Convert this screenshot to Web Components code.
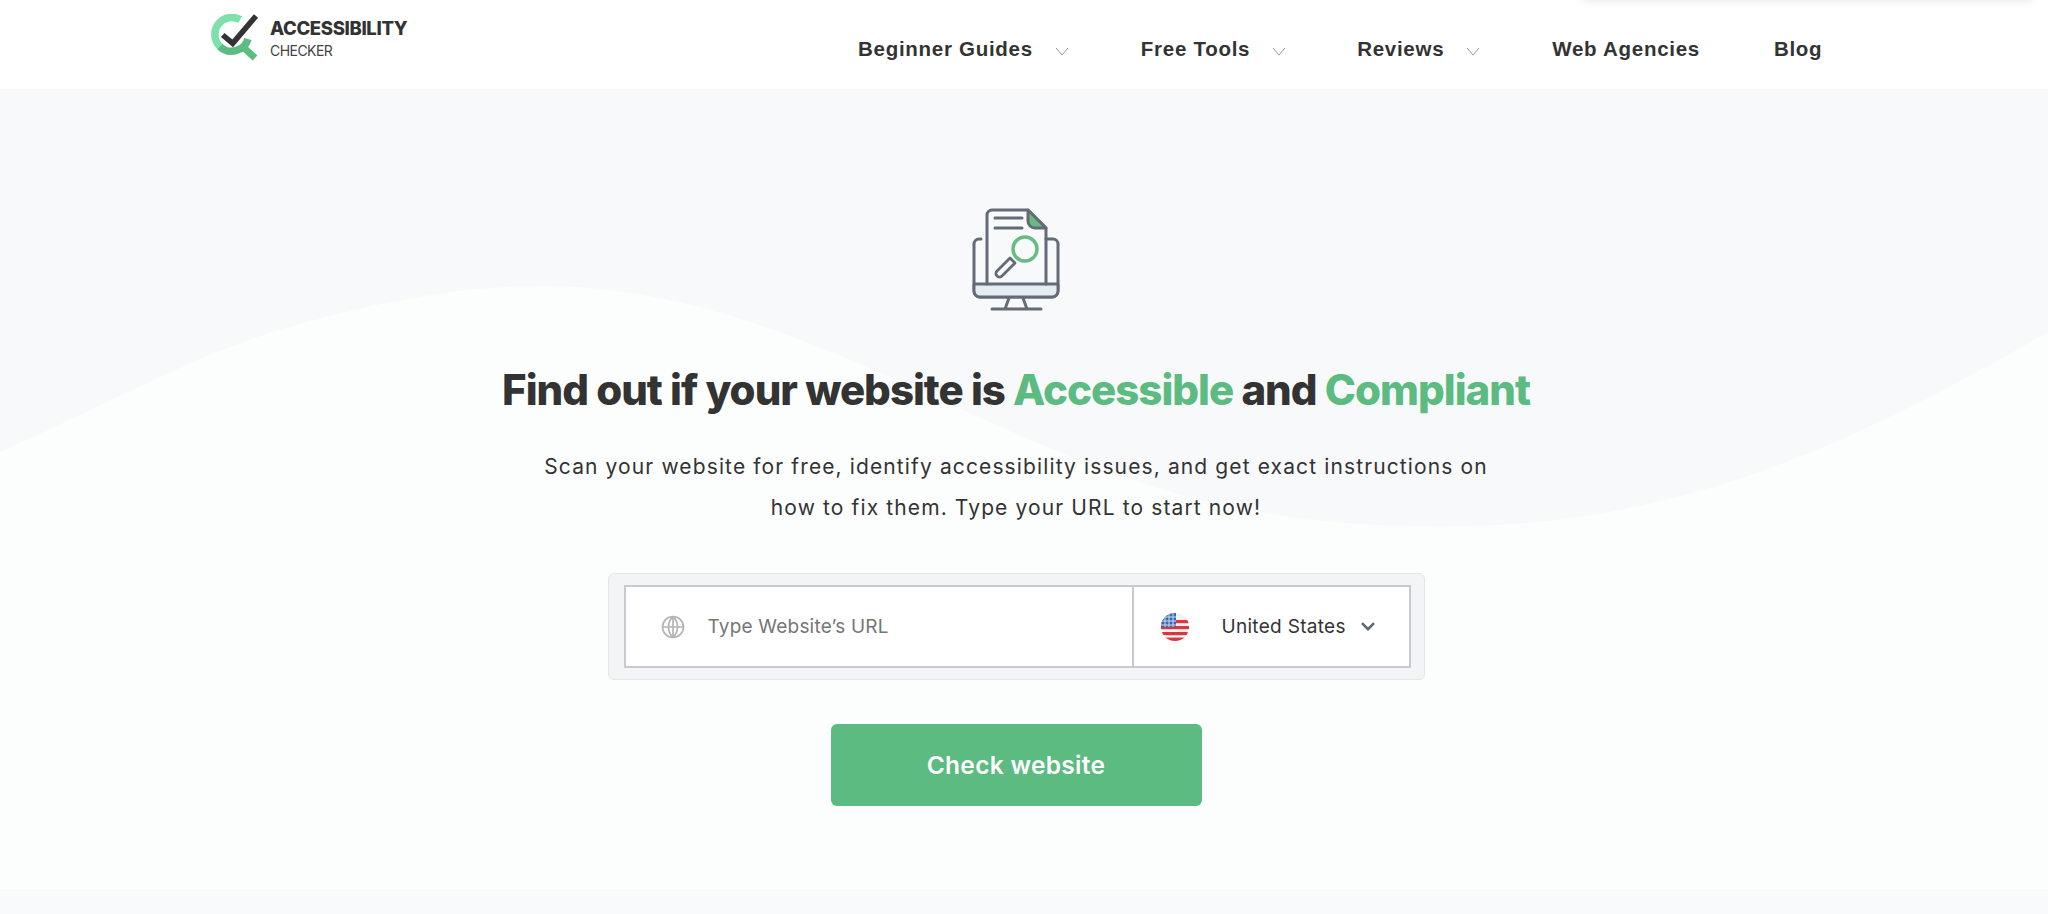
<!DOCTYPE html>
<html lang="en">
<head>
<meta charset="utf-8">
<title>Accessibility Checker</title>
<style>
    html, body { margin: 0; padding: 0; background: #fff; }
    body { height: 914px; overflow: hidden; font-family: Inter, 'Liberation Sans', sans-serif; }
</style>
</head>
<body>
<site-header></site-header>
<hero-section>
    <span slot="lead-1">Scan your website for free, identify accessibility issues, and get exact instructions on</span>
    <span slot="lead-2">how to fix them. Type your URL to start now!</span>
    <scan-form></scan-form>
</hero-section>
<script>
class SiteLogo extends HTMLElement {
    constructor() {
        super();
        this.attachShadow({ mode: 'open' });
    }

    connectedCallback() {
        this.shadowRoot.innerHTML = `
            <style>
                :host { display: flex; flex: none; width: 196px; align-items: flex-start; color: #333; font-family: Inter, sans-serif; }
                svg { width: 48px; height: 50px; flex: none; margin-top: 14px; }
                .words { margin: 18px 0 0 11px; white-space: nowrap; }
                .top { font-size: 18.5px; font-weight: 800; line-height: 20px; letter-spacing: -0.35px; }
                .sub { font-size: 14px; font-weight: 400; line-height: 16px; margin-top: 5px; letter-spacing: -0.55px; color: #444; }
            </style>
            <svg viewBox="0 0 48 50" fill="none">
                <path d="M29.2 5.600A17 17 0 0 0 8.700 32.300" stroke="#7fe0ab" stroke-width="7.500"/>
                <path d="M8.700 32.300A17 17 0 0 0 37 25" stroke="#5bbd80" stroke-width="7.500"/>
                <path d="M31 32l13 12" stroke="#5bbd80" stroke-width="7"/>
                <path d="M11.700 21l10 8.300L45 2" stroke="#333" stroke-width="5.500"/>
            </svg>
            <div class="words">
                <div class="top">ACCESSIBILITY</div>
                <div class="sub">CHECKER</div>
            </div>
        `;
    }
}

class NavItem extends HTMLElement {
    constructor() {
        super();
        this.attachShadow({ mode: 'open' });
    }

    connectedCallback() {
        const caret = this.hasAttribute('menu')
            ? '<svg viewBox="0 0 14 9" fill="none"><path d="M1 1l6 7 6-7" stroke="#9a9a9a" stroke-width="1"/></svg>'
            : '';
        this.shadowRoot.innerHTML = `
            <style>
                :host { display: flex; align-items: center; }
                span { font: 700 20.5px 'Liberation Sans', Arial, sans-serif; letter-spacing: 0.72px; color: #333; white-space: nowrap; }
                svg { width: 14px; height: 9px; margin: 4px 0 0 22px; }
            </style>
            <span><slot></slot></span>${caret}
        `;
    }
}

class SiteHeader extends HTMLElement {
    constructor() {
        super();
        this.attachShadow({ mode: 'open' });
    }

    connectedCallback() {
        this.shadowRoot.innerHTML = `
            <style>
                :host { display: flex; position: relative; height: 89px; background: #fff; box-sizing: border-box; padding: 0 0 0 211px; }
                nav { display: flex; margin-left: 451px; height: 100%; align-items: center; padding-top: 9px; box-sizing: border-box; }
                nav-item { margin-right: 72px; }
                nav-item:nth-child(2) { margin-right: 71px; }
                nav-item:nth-child(3) { margin-right: 72px; }
                nav-item:nth-child(4) { margin-right: 74px; }
                .drop { position: absolute; left: 1580px; right: 14px; top: -12px; height: 12px; border-radius: 6px; background: #fff; box-shadow: 0 1px 10px rgba(0,0,0,.09); }
            </style>
            <site-logo></site-logo>
            <nav>
                <nav-item menu>Beginner Guides</nav-item>
                <nav-item menu>Free Tools</nav-item>
                <nav-item menu>Reviews</nav-item>
                <nav-item>Web Agencies</nav-item>
                <nav-item>Blog</nav-item>
            </nav>
            <div class="drop"></div>
        `;
    }
}

class ScanForm extends HTMLElement {
    constructor() {
        super();
        this.attachShadow({ mode: 'open' });
    }

    connectedCallback() {
        this.shadowRoot.innerHTML = `
            <style>
                :host { display: flex; flex-direction: column; align-items: center; font-family: Inter, sans-serif; }
                .frame { box-sizing: border-box; width: 817px; height: 107px; padding: 11px 13px 12px 15px; background: #f3f4f6; border: 1px solid #e4e6e9; border-radius: 6px; }
                .fields { box-sizing: border-box; display: flex; height: 83px; background: #fff; border: 2px solid #c8cacf; }
                .url { box-sizing: border-box; width: 508px; display: flex; align-items: center; padding-left: 35px; border-right: 2px solid #c8cacf; color: #767676; font-size: 19px; }
                .url svg { width: 24px; height: 24px; margin-right: 23px; }
                .place { letter-spacing: 0.2px; }
                .country { flex: 1; display: flex; align-items: center; padding-left: 27px; font-size: 19px; letter-spacing: 0.3px; color: #333; }
                .flag { width: 28px; height: 28px; margin-right: 33px; }
                .chev { width: 14px; height: 9px; margin-left: 15px; }
                button { display: block; width: 371px; height: 82px; margin-top: 44px; border: 0; border-radius: 6px; background: #5bbb80; color: #fff; font: 600 24.500px Inter, sans-serif; letter-spacing: 0.3px; }
            </style>
            <div class="frame">
                <div class="fields">
                    <div class="url">
                        <svg viewBox="0 0 24 24" fill="none" stroke="#b4b4b4" stroke-width="1.7">
                            <circle cx="12" cy="12" r="10.5"/>
                            <path d="M12 1.500C6 7 6 17 12 22.500M12 1.500C18 7 18 17 12 22.500M12 1.500v21M1.500 12h21"/>
                        </svg>
                        <span class="place">Type Website’s URL</span>
                    </div>
                    <div class="country">
                        <svg class="flag" viewBox="0 0 28 28">
                            <defs><clipPath id="c"><circle cx="14" cy="14" r="14"/></clipPath></defs>
                            <g clip-path="url(#c)">
                                <rect width="28" height="28" fill="#f4f1f1"/>
                                <rect y="7" width="28" height="3.2" fill="#d9363e"/>
                                <rect y="13" width="28" height="3.2" fill="#d9363e"/>
                                <rect y="19" width="28" height="3.2" fill="#d9363e"/>
                                <rect y="24.6" width="28" height="3.4" fill="#d9363e"/>
                                <rect width="15" height="14" fill="#3a66b5"/>
                                <path d="M4 0v14M8 0v14M12 0v14M0 4h15M0 8h15M0 12h15" stroke="#cfdcf0" stroke-width="1"/>
                            </g>
                        </svg>
                        <span>United States</span>
                        <svg class="chev" viewBox="0 0 14 9" fill="none"><path d="M1 1.2l6 6 6-6" stroke="#5c6470" stroke-width="2.400"/></svg>
                    </div>
                </div>
            </div>
            <button type="button">Check website</button>
        `;
    }
}

class HeroSection extends HTMLElement {
    constructor() {
        super();
        this.attachShadow({ mode: 'open' });
    }

    connectedCallback() {
        this.shadowRoot.innerHTML = `
            <style>
                :host { display: flex; flex-direction: column; align-items: center; position: relative; box-sizing: border-box; height: 825px; padding-right: 16px; background: #f8f9fb; overflow: hidden; font-family: Inter, sans-serif; }
                .wave { position: absolute; left: 0; top: 0; width: 2048px; height: 825px; }
                .band { position: absolute; left: 0; right: 0; bottom: 0; height: 25px; background: #f9fafc; }
                .body { position: relative; display: flex; flex-direction: column; align-items: center; }
                .art { width: 88px; height: 103px; margin-top: 119px; display: block; }
                h1 { margin: 55px 0 0; font-size: 42px; line-height: 48px; font-weight: 800; letter-spacing: -1px; color: #333; white-space: nowrap; }
                h1 b { font-weight: 800; color: #5bbb80; }
                p { margin: 32px 0 0; text-align: center; font-size: 21px; line-height: 41px; letter-spacing: 1.12px; color: #333; }
                p span { display: block; }
                .form { margin-top: 45px; }
            </style>
            <svg class="wave" viewBox="0 0 2048 825" preserveAspectRatio="none">
                <path d="M0 363C120 310 200 262 300 235C390 210 470 196 550 197C760 200 930 320 1130 390C1260 435 1370 438 1470 437C1700 432 1880 340 2048 243V825H0Z" fill="#fcfdfd"/>
            </svg>
            <div class="band"></div>
            <div class="body">
                <svg class="art" viewBox="22 13 88 103" fill="none" stroke="#646b76" stroke-width="3" stroke-linecap="round" stroke-linejoin="round">
                    <path d="M31 44h-2a5 5 0 0 0-5 5v47a6 6 0 0 0 6 6h72a6 6 0 0 0 6-6V49a5 5 0 0 0-5-5h-7"/>
                    <path d="M24 89h84v7a6 6 0 0 1-6 6H30a6 6 0 0 1-6-6z" fill="#e3edf3"/>
                    <path d="M37 89V20a5 5 0 0 1 5-5h36l18 18v56"/>
                    <path d="M78 15v11a7 7 0 0 0 7 7h11z" fill="#68bb82"/>
                    <path d="M45 23h27M45 33h27"/>
                    <path d="M60 63L47 76a3.200 3.200 0 0 0 5 5l13-13z" stroke-width="2.800"/>
                    <circle cx="75" cy="54" r="12" stroke="#68bb82" stroke-width="3.500"/>
                    <path d="M59 103l-4 11M73 103l4 11M42 114h49"/>
                </svg>
                <h1>Find out if your website is <b>Accessible</b> and <b>Compliant</b></h1>
                <p><span><slot name="lead-1"></slot></span><span><slot name="lead-2"></slot></span></p>
                <div class="form"><slot></slot></div>
            </div>
        `;
    }
}

customElements.define('site-logo', SiteLogo);
customElements.define('nav-item', NavItem);
customElements.define('site-header', SiteHeader);
customElements.define('scan-form', ScanForm);
customElements.define('hero-section', HeroSection);
</script>
</body>
</html>
